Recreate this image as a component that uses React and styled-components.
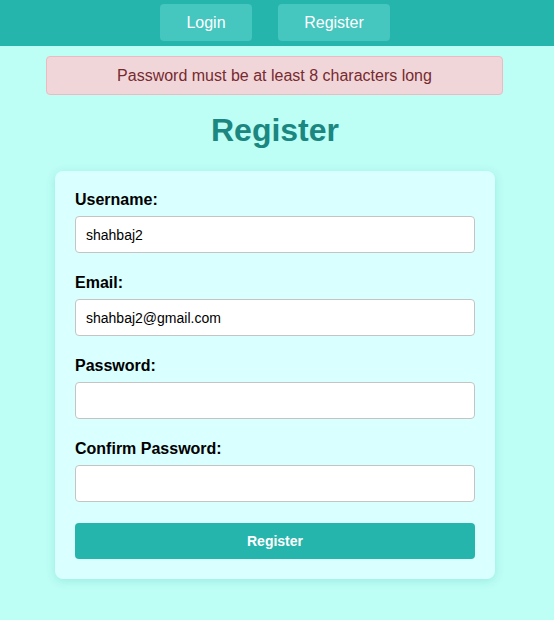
import React from "react";
import styled, { createGlobalStyle } from "styled-components";

const Global = createGlobalStyle`
  html, body { margin: 0; padding: 0; }
  body {
    background: #bdfef5;
    font-family: "Liberation Sans", Arial, Helvetica, sans-serif;
    min-height: 620px;
  }
  * { box-sizing: border-box; }
`;

const Nav = styled.nav`
  height: 46px;
  background: #26b5ad;
  display: flex;
  justify-content: center;
  align-items: flex-start;
  gap: 26px;
  padding: 4px 4px 0 0;
`;

const NavButton = styled.button`
  height: 37px;
  width: ${(p) => p.$w}px;
  border: none;
  border-radius: 4px;
  background: #45c6bf;
  color: #fff;
  font-family: inherit;
  font-size: 16px;
  cursor: pointer;
`;

const Main = styled.main`
  display: flex;
  flex-direction: column;
  align-items: center;
  padding-right: 4px;
`;

const Alert = styled.div`
  margin: 10px 1px 0 0;
  width: 457px;
  height: 39px;
  display: flex;
  align-items: center;
  justify-content: center;
  background: #f0d6d9;
  border: 1px solid #ecbac0;
  border-radius: 4px;
  color: #772a30;
  font-size: 16px;
`;

const Title = styled.h2`
  margin: 17px 0 22px;
  font-size: 32px;
  line-height: 37px;
  font-weight: bold;
  color: #1b8780;
`;

const Card = styled.form`
  width: 440px;
  background: #d9ffff;
  border-radius: 8px;
  padding: 20px;
  box-shadow: 0 2px 10px rgba(0, 150, 140, 0.18);
`;

const Group = styled.div`
  margin-bottom: 21px;
`;

const Label = styled.label`
  display: block;
  font-size: 16px;
  line-height: 18px;
  font-weight: bold;
  color: #000;
  margin-bottom: 7px;
`;

const Input = styled.input`
  display: block;
  width: 100%;
  height: 37px;
  border: 1px solid #c4c4c4;
  border-radius: 4px;
  background: #fff;
  padding: 0 10px;
  font-family: inherit;
  font-size: 14px;
  color: #000;
  outline: none;
`;

const Submit = styled.button`
  display: block;
  width: 100%;
  height: 36px;
  border: none;
  border-radius: 4px;
  background: #26b5ad;
  color: #fff;
  font-family: inherit;
  font-size: 14px;
  font-weight: bold;
  cursor: pointer;
`;

const fields = [
  { label: "Username:", type: "text", value: "shahbaj2" },
  { label: "Email:", type: "email", value: "shahbaj2@gmail.com" },
  { label: "Password:", type: "password", value: "" },
  { label: "Confirm Password:", type: "password", value: "" },
];

export default function App() {
  return (
    <>
      <Global />
      <Nav>
        <NavButton $w={92}>Login</NavButton>
        <NavButton $w={112}>Register</NavButton>
      </Nav>
      <Main>
        <Alert>Password must be at least 8 characters long</Alert>
        <Title>Register</Title>
        <Card onSubmit={(e) => e.preventDefault()}>
          {fields.map((f) => (
            <Group key={f.label}>
              <Label>{f.label}</Label>
              <Input type={f.type} defaultValue={f.value} />
            </Group>
          ))}
          <Submit type="submit">Register</Submit>
        </Card>
      </Main>
    </>
  );
}
